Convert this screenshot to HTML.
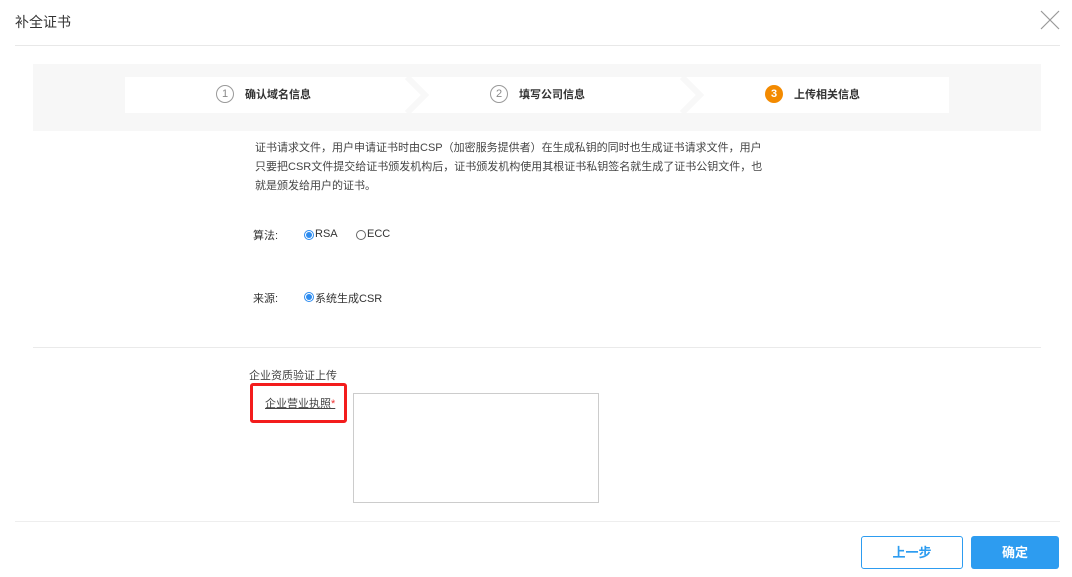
<!DOCTYPE html>
<html><head><meta charset="utf-8"><style>
*{margin:0;padding:0;box-sizing:border-box}
body{width:1072px;height:577px;background:#fff;font-family:"Liberation Sans","Noto Sans CJK SC",sans-serif;color:#333;position:relative;overflow:hidden}
.a{position:absolute}
.t{font-size:12px;white-space:nowrap}
</style></head><body>
<div class="a" style="left:15px;top:12px;font-size:14px;color:#333">补全证书</div>
<svg class="a" style="left:1040px;top:10px" width="20" height="20"><path d="M1 1L19 19M19 1L1 19" stroke="#999" stroke-width="1.2"/></svg>
<div class="a" style="left:15px;top:45px;width:1045px;height:1px;background:#e8e8e8"></div>

<div class="a" style="left:33px;top:64px;width:1008px;height:67px;background:#f7f7f7"></div>
<div class="a" style="left:125px;top:77px;width:824px;height:36px;background:#fff"></div>
<svg class="a" style="left:405px;top:77px" width="30" height="36"><path d="M2 0L20 18L2 36" stroke="#f8f8f8" stroke-width="6" fill="none"/></svg>
<svg class="a" style="left:680px;top:77px" width="30" height="36"><path d="M2 0L20 18L2 36" stroke="#f8f8f8" stroke-width="6" fill="none"/></svg>
<div class="a" style="left:216px;top:85px;width:18px;height:18px;border:1px solid #999;border-radius:50%;font-size:11px;color:#888;text-align:center;line-height:16px">1</div>
<div class="a t" style="left:245px;top:86px;color:#333;font-weight:bold;font-size:11px">确认域名信息</div>
<div class="a" style="left:490px;top:85px;width:18px;height:18px;border:1px solid #999;border-radius:50%;font-size:11px;color:#888;text-align:center;line-height:16px">2</div>
<div class="a t" style="left:519px;top:86px;color:#333;font-weight:bold;font-size:11px">填写公司信息</div>
<div class="a" style="left:765px;top:85px;width:18px;height:18px;background:#f38a00;border-radius:50%;font-size:11px;color:#fff;text-align:center;line-height:18px;font-weight:bold">3</div>
<div class="a t" style="left:794px;top:86px;color:#333;font-weight:bold;font-size:11px">上传相关信息</div>

<div class="a" style="left:255px;top:139px;width:512px;font-size:11px;line-height:19px;color:#444">证书请求文件，用户申请证书时由CSP（加密服务提供者）在生成私钥的同时也生成证书请求文件，用户只要把CSR文件提交给证书颁发机构后，证书颁发机构使用其根证书私钥签名就生成了证书公钥文件，也就是颁发给用户的证书。</div>

<div class="a t" style="left:253px;top:227px;font-size:11px">算法:</div>
<div class="a" style="left:304px;top:230px;width:10px;height:10px;border:1px solid #2d8cf0;border-radius:50%"><div style="margin:1px;width:6px;height:6px;border-radius:50%;background:#2d8cf0"></div></div>
<div class="a t" style="left:315px;top:228px;font-size:11px">RSA</div>
<div class="a" style="left:356px;top:230px;width:10px;height:10px;border:1px solid #666;border-radius:50%"></div>
<div class="a t" style="left:367px;top:228px;font-size:11px">ECC</div>

<div class="a t" style="left:253px;top:290px;font-size:11px">来源:</div>
<div class="a" style="left:304px;top:292px;width:10px;height:10px;border:1px solid #2d8cf0;border-radius:50%"><div style="margin:1px;width:6px;height:6px;border-radius:50%;background:#2d8cf0"></div></div>
<div class="a t" style="left:315px;top:290px;font-size:11px">系统生成CSR</div>

<div class="a" style="left:33px;top:347px;width:1008px;height:1px;background:#eaeaea"></div>
<div class="a t" style="left:249px;top:367px;font-size:11px;color:#444">企业资质验证上传</div>
<div class="a" style="left:250px;top:383px;width:97px;height:40px;border:3px solid #f31c1c;border-radius:3px"></div>
<div class="a t" style="left:265px;top:395px;font-size:11px;color:#444;text-decoration:underline">企业营业执照<span style="color:#e33;text-decoration:none">*</span></div>
<div class="a" style="left:353px;top:393px;width:246px;height:110px;border:1px solid #ccc"></div>

<div class="a" style="left:15px;top:521px;width:1045px;height:1px;background:#eee"></div>
<div class="a" style="left:861px;top:536px;width:102px;height:33px;border:1px solid #2d9cf0;border-radius:3px;color:#2d9cf0;font-size:13px;font-weight:bold;text-align:center;line-height:31px">上一步</div>
<div class="a" style="left:971px;top:536px;width:88px;height:33px;background:#2d9cf0;border-radius:3px;color:#fff;font-size:13px;font-weight:bold;text-align:center;line-height:33px">确定</div>
</body></html>
